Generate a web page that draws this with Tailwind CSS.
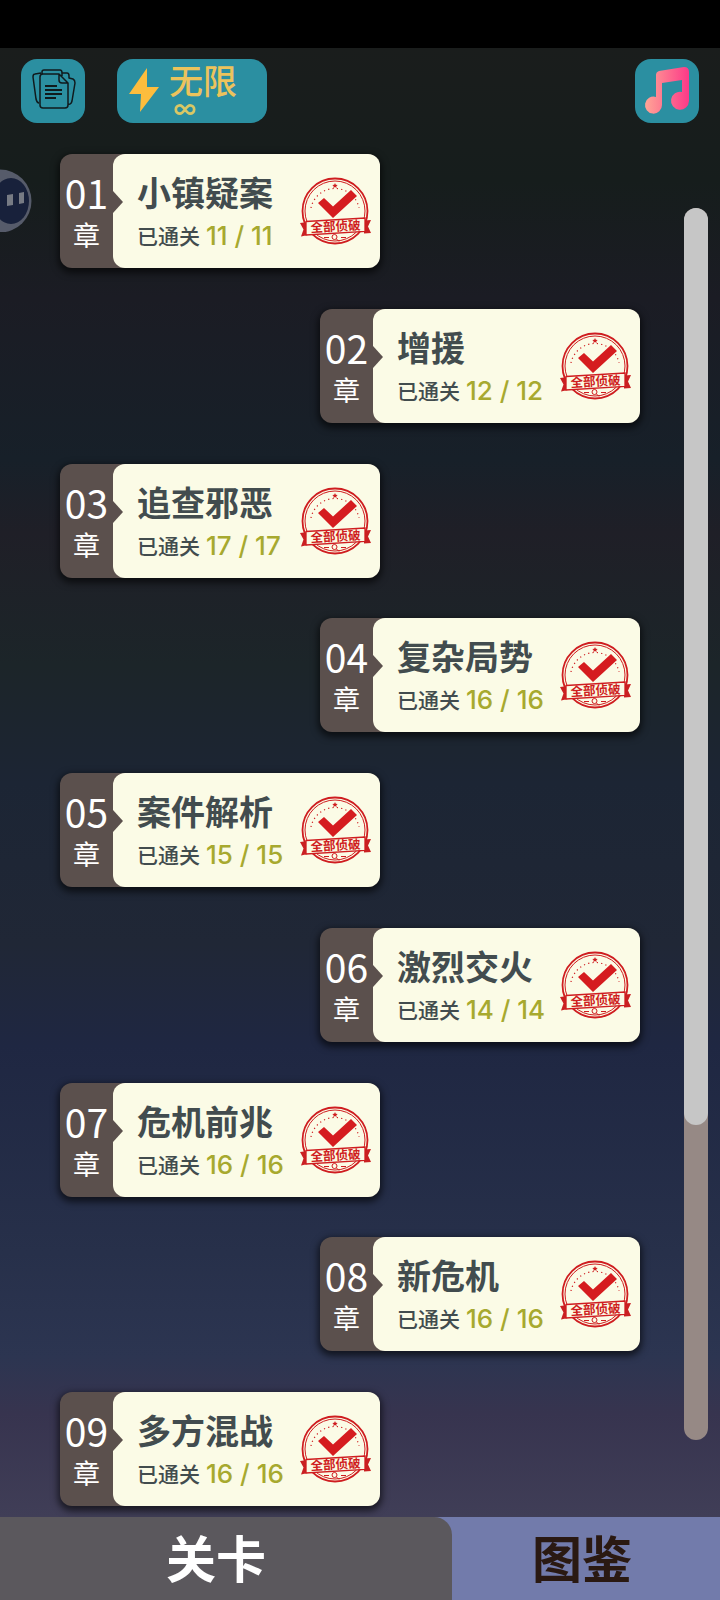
<!DOCTYPE html>
<html lang="zh-CN">
<head>
<meta charset="utf-8">
<meta name="viewport" content="width=device-width, initial-scale=1">
<title>关卡</title>
<script src="https://cdn.jsdelivr.net/npm/@tailwindcss/browser@4"></script>
</head>
<body class="min-h-screen flex flex-col bg-black pt-12 font-['Noto_Sans_CJK_SC',sans-serif]">
<svg class="hidden" aria-hidden="true">
  <symbol id="stamp" viewBox="0 0 74 74">
    <g fill="none" stroke="#cf1d20">
      <circle cx="35" cy="37" r="32.5" stroke-width="1.8"/>
      <circle cx="35" cy="37" r="30" stroke-width="1"/>
      <path d="M11 34A24.500 24.500 0 0 1 59 34" stroke-width="1.200" stroke-dasharray="1.200 3.200"/>
    </g>
    <path d="M35 9l.8 1.700 1.900.2-1.400 1.300.4 1.900-1.700-1-1.700 1 .4-1.900-1.400-1.300 1.900-.2z" fill="#cf1d20"/>
    <path d="M18 29l6-5 9 8.500L51 16l6 6-24 22z" fill="#d51c1f"/>
    <path d="M0 49l8-1v13l-7 1.500 2.500-7zM71 46l-7 .5v13l7-.5-3-6.500z" fill="#c92022"/>
    <path d="M6 47.500L65 44v13.500L6 61z" fill="#fbfbe6" stroke="#cf1d20" stroke-width="1.300"/>
    <text x="35.500" y="57" text-anchor="middle" font-size="12.500" font-weight="700" fill="#cf1d20" transform="rotate(-3 35 52)" font-family="Noto Sans CJK SC, sans-serif">全部侦破</text>
    <g fill="none" stroke="#cf1d20" stroke-width="1"><circle cx="34.500" cy="63" r="2.500"/><path d="M36.500 65l2.500 2.500M24 63.500h5M41 63.500h5"/></g>
  </symbol>
</svg>
<main class="relative flex-1 flex flex-col overflow-hidden bg-[linear-gradient(to_bottom,#1a1d1c_0%,#161d1c_9%,#1b1c24_17%,#172029_28%,#1f1f27_33%,#1c2529_42%,#1c2534_50%,#202736_61%,#1f2742_68%,#27304a_82%,#2c3551_89%,#37344f_93%,#403e57_100%)]" id="levels">
  <svg class="absolute left-0 top-[120px] w-9 h-16" viewBox="0 0 36 64" aria-hidden="true">
    <circle cx="0" cy="33" r="31.500" fill="#565b6a"/><ellipse cx="11" cy="33" rx="18" ry="23" fill="#18213b"/>
    <path d="M7 27l6-1v11l-6 1zM19 25l5-1v11l-5 1z" fill="#777b84"/>
  </svg>
  <header class="flex items-start px-[21px] pt-[11px]">
    <button class="size-16 rounded-2xl bg-[#2b8fa1]" aria-label="档案">
      <svg class="size-16" viewBox="0 0 64 64" fill="none" stroke="#101a1d" stroke-width="1.500" stroke-linejoin="round" aria-hidden="true">
        <path d="M22 15q-3 0-3 3v28q0 3 3 3h22q3 0 3-3V24l-9-9zM38 15v6q0 3 3 3h6M21 15v-2q0-2 2-2h16q2 0 2 3v3M20 14l-6 1q-2 0-2 3l3 22q1 4 3 4M41 14h5q2 0 2 3v2l4 1q2 1 2 4l-3 18q-1 4-4 3"/>
        <path d="M24 27h12M24 31h17M24 35h17M24 39h11" stroke-width="2"/>
      </svg>
    </button>
    <button class="ml-8 h-16 w-[150px] rounded-2xl bg-[#2b8fa1] flex text-[#ecc35c]" aria-label="体力 无限">
      <svg class="ml-3 mt-[9px] w-[30px] h-11" viewBox="0 0 30 44" aria-hidden="true"><path d="M18 0L0 26h12l-1 18 19-25H18z" fill="#fdbd3d"/></svg>
      <span class="ml-[10px] mt-[3px] flex flex-col items-start"><span class="text-[34px] leading-9 font-medium">无限</span>
        <svg class="ml-[5px] mt-[6px] w-[22px] h-[11px]" viewBox="0 0 22 12" fill="none" stroke="#d9c765" stroke-width="3" aria-hidden="true"><path d="M11 6C8.500 2.500 7 1.500 5.500 1.500a4.500 4.500 0 0 0 0 9C7 10.500 8.500 9.500 11 6s4-4.500 5.500-4.500a4.500 4.500 0 0 1 0 9C15 10.500 13.500 9.500 11 6z"/></svg>
      </span>
    </button>
    <button class="ml-auto size-16 rounded-2xl bg-[#2b8fa1]" aria-label="音乐">
      <svg class="size-16" viewBox="0 0 64 64" aria-hidden="true"><defs><linearGradient id="pink" x1="0" x2="1"><stop stop-color="#ffa596"/><stop offset="1" stop-color="#fc3988"/></linearGradient></defs>
        <path d="M21 16q0-3 3-4l25-4q5 0 5 5v29a9 9 0 1 1-7-9V21l-20 3v22a8.500 8.500 0 1 1-6-8z" fill="url(#pink)"/></svg>
    </button>
  </header>
  <div class="flex-1 flex pt-[31px]">
    <ol id="chapters" class="flex-1 flex flex-col justify-between gap-6 pl-[60px] pr-11 pb-[11px]"></ol>
    <div class="mt-[54px] mb-[77px] mr-3 w-6 rounded-full bg-[#968985]" role="scrollbar" aria-controls="chapters" aria-orientation="vertical" aria-valuenow="0" aria-label="章节滚动条">
      <div class="h-[74.4%] rounded-full bg-[#c6c6c6]"></div>
    </div>
  </div>
</main>
<nav class="flex bg-[#727bab] text-[50px] leading-[79px] pb-1 font-bold">
  <a href="#levels" class="w-[452px] max-w-[63%] -mb-1 rounded-tr-[18px] bg-[#5b585d] text-white text-center pr-5" aria-current="page">关卡</a>
  <a href="#gallery" class="flex-1 text-center text-[#2a1912] pr-2">图鉴</a>
</nav>
<script>
const chapters = [['小镇疑案',11],['增援',12],['追查邪恶',17],['复杂局势',16],['案件解析',15],['激烈交火',14],['危机前兆',16],['新危机',16],['多方混战',16]];
document.getElementById('chapters').innerHTML = chapters.map(([name, n], i) => `
<li class="w-80 odd:self-start even:self-end">
  <a href="#levels" class="flex rounded-xl bg-[#5b504d] shadow-[0_3px_7px_2px_#0009]">
    <span class="w-[53px] shrink-0 flex flex-col items-center pt-4 text-white"><span class="text-[39px] leading-[44px]">0${i + 1}</span><span class="text-[27px] leading-[42px]">章</span></span>
    <span class="relative flex-1 flex rounded-xl bg-[#fbfbe6] h-[114px] pl-6 pt-4">
      <span class="absolute left-0 top-[37px] border-y-[11px] border-l-[10px] border-y-transparent border-l-[#5b504d]"></span>
      <span class="flex flex-col whitespace-nowrap text-[#424c4e]"><strong class="text-[34px] leading-[43px]">${name}</strong>
        <span class="flex items-center gap-[6px] text-[21px] leading-[42px] font-medium">已通关<span class="pt-[2px] font-['Inter',sans-serif] text-[26px] text-[#a7a92f]">${n} / ${n}</span></span></span>
      <svg class="absolute right-[6px] top-5 size-[74px]" aria-hidden="true"><use href="#stamp"/></svg>
    </span>
  </a>
</li>`).join('');
</script>
</body>
</html>
